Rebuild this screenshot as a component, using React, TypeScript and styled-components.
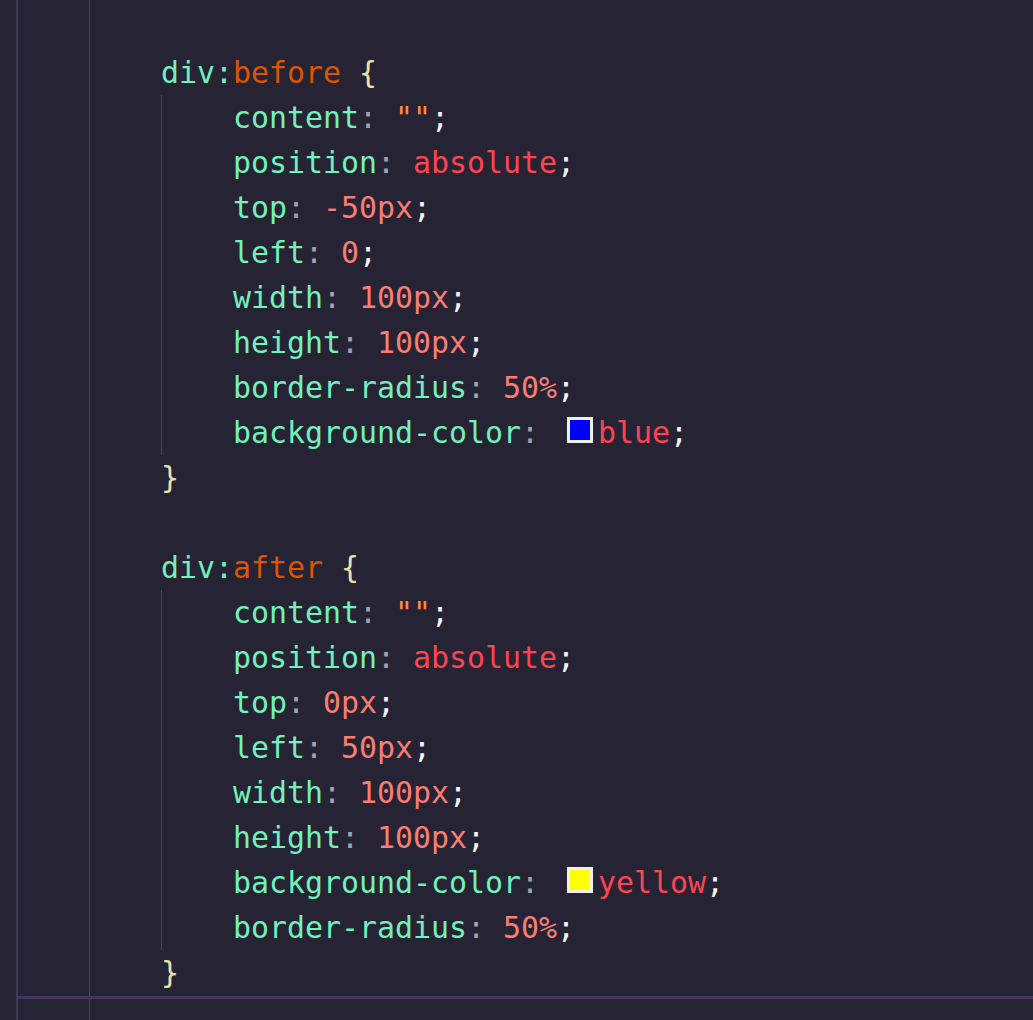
import React from "react";
import styled, { createGlobalStyle } from "styled-components";

const Global = createGlobalStyle`
  html, body {
    margin: 0;
    padding: 0;
    height: 100%;
    overflow: hidden;
    background: #262335;
  }
  #root { height: 100%; }
`;

type Kind = "sel" | "pseudo" | "brace" | "prop" | "colon" | "str" | "kw" | "num" | "semi";

const palette: Record<Kind, string> = {
  sel: "#72f1b8",
  pseudo: "#dd5500",
  brace: "#ece0a6",
  prop: "#72f1b8",
  colon: "#a3a1ad",
  str: "#ff8b39",
  kw: "#fe4450",
  num: "#f97e72",
  semi: "#f4f4f4",
};

const Page = styled.div`
  display: flex;
  height: 100vh;
  background: #262335;
  font-family: "DejaVu Sans Mono", monospace;
  font-size: 29.9px;
  overflow: hidden;
`;

const Rail = styled.div`
  flex: none;
  width: 16px;
  border-right: 2px solid #3d3a52;
`;

const Editor = styled.div`
  flex: 1;
  min-width: 0;
  display: flex;
  padding-left: 71px;
`;

const Guide = styled.div`
  flex: 1;
  min-width: 0;
  display: flex;
  flex-direction: column;
  border-left: 1px solid #573a78;
  padding-left: 71px;
`;

const Lines = styled.div`
  display: flex;
  flex-direction: column;
  margin-top: -40px;
`;

const Line = styled.div`
  height: 45px;
  line-height: 45px;
  white-space: pre;
`;

const Block = styled.div`
  border-left: 1px solid #4a4660;
  padding-left: 71px;
`;

const ActiveLine = styled.div`
  margin-left: -143px;
  margin-top: 1px;
  height: 45px;
  border-top: 3px solid #463465;
`;

const Tok = styled.span<{ $kind: Kind }>`
  color: ${(p) => palette[p.$kind]};
`;

const Swatch = styled.span<{ $color: string }>`
  display: inline-block;
  box-sizing: border-box;
  width: 26px;
  height: 26px;
  margin: 0 5px 0 10px;
  border: 3px solid #efefef;
  background: ${(p) => p.$color};
`;

type Decl = { prop: string; value: string; kind: Kind; swatch?: string };

type Rule = { pseudo: string; decls: Decl[] };

const rules: Rule[] = [
  {
    pseudo: "before",
    decls: [
      { prop: "content", value: '""', kind: "str" },
      { prop: "position", value: "absolute", kind: "kw" },
      { prop: "top", value: "-50px", kind: "num" },
      { prop: "left", value: "0", kind: "num" },
      { prop: "width", value: "100px", kind: "num" },
      { prop: "height", value: "100px", kind: "num" },
      { prop: "border-radius", value: "50%", kind: "num" },
      { prop: "background-color", value: "blue", kind: "kw", swatch: "#0000ff" },
    ],
  },
  {
    pseudo: "after",
    decls: [
      { prop: "content", value: '""', kind: "str" },
      { prop: "position", value: "absolute", kind: "kw" },
      { prop: "top", value: "0px", kind: "num" },
      { prop: "left", value: "50px", kind: "num" },
      { prop: "width", value: "100px", kind: "num" },
      { prop: "height", value: "100px", kind: "num" },
      { prop: "background-color", value: "yellow", kind: "kw", swatch: "#ffff00" },
      { prop: "border-radius", value: "50%", kind: "num" },
    ],
  },
];

function DeclLine({ d }: { d: Decl }) {
  return (
    <Line>
      <Tok $kind="prop">{d.prop}</Tok>
      <Tok $kind="colon">: </Tok>
      {d.swatch && <Swatch $color={d.swatch} />}
      <Tok $kind={d.kind}>{d.value}</Tok>
      <Tok $kind="semi">;</Tok>
    </Line>
  );
}

function RuleBlock({ rule }: { rule: Rule }) {
  return (
    <>
      <Line>
        <Tok $kind="sel">div:</Tok>
        <Tok $kind="pseudo">{rule.pseudo}</Tok>
        <Tok $kind="brace"> {"{"}</Tok>
      </Line>
      <Block>
        {rule.decls.map((d) => (
          <DeclLine key={d.prop} d={d} />
        ))}
      </Block>
      <Line>
        <Tok $kind="brace">{"}"}</Tok>
      </Line>
    </>
  );
}

export default function App() {
  return (
    <>
      <Global />
      <Page>
        <Rail />
        <Editor>
          <Guide>
            <Lines>
              <Line>
                <Tok $kind="brace">{"}"}</Tok>
              </Line>
              <Line> </Line>
              <RuleBlock rule={rules[0]} />
              <Line> </Line>
              <RuleBlock rule={rules[1]} />
              <ActiveLine />
            </Lines>
          </Guide>
        </Editor>
      </Page>
    </>
  );
}
